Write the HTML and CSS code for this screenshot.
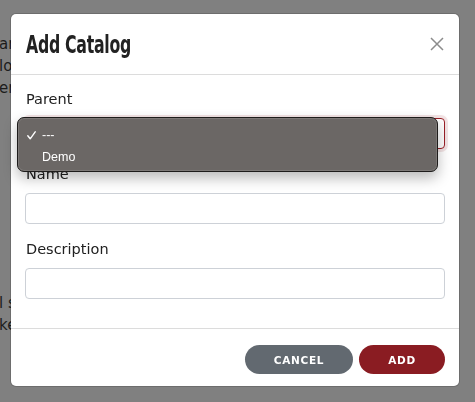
FILE: index.html
```html
<!DOCTYPE html>
<html>
<head>
<meta charset="utf-8">
<link rel="stylesheet" href="styles.css">
</head>
<body>
<div class="page">
  <p class="bg-line bg-top">ar</p>
  <p class="bg-line">lo</p>
  <p class="bg-line">em</p>
  <p class="bg-line bg-low">l s</p>
  <p class="bg-line">ke</p>
</div>
<div class="overlay">
  <div class="modal">
    <div class="modal-header">
      <h2 class="modal-title">Add Catalog</h2>
      <button class="close" aria-label="Close">
        <svg width="14" height="14" viewBox="0 0 14 14"><path d="M1 1 L13 13 M13 1 L1 13" stroke="#8c8c8c" stroke-width="1.5" fill="none"/></svg>
      </button>
    </div>
    <div class="modal-body">
      <div class="group">
        <label class="label">Parent</label>
        <div class="select-wrap">
          <div class="select focus"></div>
          <div class="popup">
            <div class="opt"><span class="check"><svg width="9" height="9" viewBox="0 0 9 9"><path d="M0.8 4.8 L3.2 7.8 L8.2 0.8" stroke="#fff" stroke-width="1.4" fill="none" stroke-linecap="round" stroke-linejoin="round"/></svg></span>---</div>
            <div class="opt"><span class="check"></span>Demo</div>
          </div>
        </div>
      </div>
      <div class="group">
        <label class="label">Name</label>
        <div class="input"></div>
      </div>
      <div class="group">
        <label class="label">Description</label>
        <div class="input"></div>
      </div>
    </div>
    <div class="modal-footer">
      <button class="btn btn-cancel">CANCEL</button>
      <button class="btn btn-add">ADD</button>
    </div>
  </div>
</div>
</body>
</html>
```
FILE: styles.css
```css
html, body {
  margin: 0;
  padding: 0;
}
body {
  background: #808080;
  width: 475px;
  height: 402px;
  overflow: hidden;
  font-family: "DejaVu Sans", "Noto Sans", sans-serif;
}
.page {
  margin-left: -1px;
  color: #1c1c1c;
  font-size: 15px;
  line-height: 22px;
}
.bg-line {
  margin: 0;
}
.bg-top {
  padding-top: 33px;
}
.bg-low {
  margin-top: 193px;
}
.overlay {
  position: fixed;
  inset: 0;
}
.modal {
  margin: 14px 0 0 11px;
  width: 448px;
  background: #fff;
  border-radius: 5px;
  box-shadow: 0 0 0 1px rgba(0,0,0,0.15);
}
.modal-header {
  height: 60px;
  border-bottom: 1px solid #dcdcdc;
  display: flex;
  align-items: center;
  justify-content: space-between;
  padding: 0 15px;
}
.modal-title {
  margin: 0;
  font-family: "DejaVu Sans Condensed", "DejaVu Sans", sans-serif;
  font-weight: 700;
  font-size: 25px;
  color: #222;
  letter-spacing: -0.4px;
  transform: scaleX(0.7);
  transform-origin: left center;
  white-space: nowrap;
}
.close {
  border: 0;
  background: none;
  padding: 0;
  width: 14px;
  height: 14px;
  display: flex;
}
.modal-body {
  padding: 14px 14px 14px 14px;
}
.group {
  margin-bottom: 15px;
}
.label {
  display: block;
  font-size: 14.5px;
  line-height: 20px;
  color: #212121;
  margin-bottom: 9px;
  padding-left: 1px;
}
.select-wrap {
  position: relative;
}
.select, .input {
  height: 29px;
  border: 1px solid #cdd1d7;
  border-radius: 4px;
  background: #fff;
}
.select.focus {
  border-color: #9a1f27;
  box-shadow: 0 0 0 3px rgba(154,31,39,0.12);
}
.popup {
  position: absolute;
  left: -8px;
  top: -1px;
  width: 421px;
  height: 55px;
  box-sizing: border-box;
  background: #6b6765;
  border: 1px solid #1e1c1b;
  border-radius: 7px;
  box-shadow: inset 0 0 0 1px rgba(255,255,255,0.12), 0 6px 14px rgba(0,0,0,0.28);
  padding-top: 6px;
  font-family: "Liberation Sans", "Inter", sans-serif;
  font-size: 12.5px;
  color: #fff;
}
.opt {
  height: 22px;
  line-height: 22px;
  display: flex;
  align-items: center;
}
.check {
  width: 15px;
  margin-left: 9px;
  display: flex;
  align-items: center;
}
.modal-footer {
  border-top: 1px solid #dcdcdc;
  padding: 16px 14px 12px;
  display: flex;
  justify-content: flex-end;
  gap: 6px;
}
.btn {
  height: 29px;
  border: 0;
  border-radius: 15px;
  color: #fff;
  font-family: "DejaVu Sans", sans-serif;
  font-weight: 700;
  font-size: 10.5px;
  letter-spacing: 0.7px;
  padding: 0;
}
.btn-cancel {
  width: 108px;
  background: #626970;
}
.btn-add {
  width: 86px;
  background: #8a1c22;
}
```
